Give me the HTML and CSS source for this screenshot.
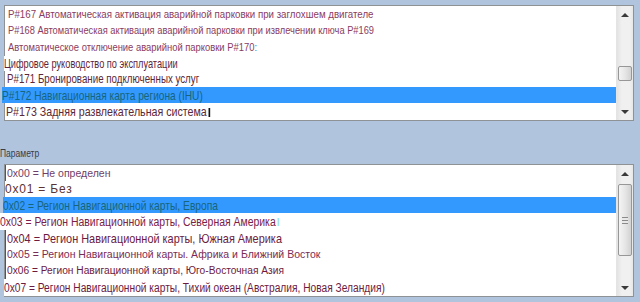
FILE: index.html
```html
<!DOCTYPE html>
<html lang="ru">
  <head>
    <meta charset="UTF-8" />
    <title>Параметры</title>
    <link rel="stylesheet" href="styles.css">
  </head>
  <body>
    <div class="list list-top">
      <div class="rows">
        <div class="row h16 pad3"><span class="t f10 c1 sx97">P#167 Автоматическая активация аварийной парковки при заглохшем двигателе</span></div>
        <div class="row h17 pad3"><span class="t f10 c1 sx93">P#168 Автоматическая активация аварийной парковки при извлечении ключа P#169</span></div>
        <div class="row h17 pad3"><span class="t f10 c1 sx94">Автоматическое отключение аварийной парковки P#170<i class="mark-blue">:</i></span></div>
        <div class="row h15 out1"><span class="t f13 c2 sx71">Цифровое руководство по эксплуатации</span></div>
        <div class="row h16 pad2"><span class="t f125 c3 sx78">P#171 Бронирование подключенных услуг</span></div>
        <div class="row h16 sel out3"><span class="t f13 csel sx78">P#172 Навигационная карта региона (IHU)</span></div>
        <div class="row h16 pad1"><span class="t f13 c3 sx82 tick">P#173 Задняя развлекательная система</span></div>
      </div>
      <div class="scroll">
        <div class="arrow up"></div>
        <div class="track">
          <div class="thumb thumb-small"></div>
        </div>
        <div class="arrow down"></div>
      </div>
    </div>

    <div class="label"><span class="sx85">Параметр</span></div>

    <div class="list list-bottom">
      <div class="rows">
        <div class="row h16 pad1 edge"><span class="t f105 c4">0x00 = Не определен</span></div>
        <div class="row h16"><span class="t f12 c5 wide">0x01 = Без</span></div>
        <div class="row h16 sel out2"><span class="t f13 csel sx79">0x02 = Регион Навигационной карты, Европа</span></div>
        <div class="row h17 out4"><span class="t f12 c6 sx87 cyan">0x03 = Регион Навигационной карты, Северная Америка</span></div>
        <div class="row h16 pad1 edge"><span class="t f13 c7 sx84">0x04 = Регион Навигационной карты, Южная Америка</span></div>
        <div class="row h16 pad1 edge"><span class="t f105 c8">0x05 = Регион Навигационной карты. Африка и Ближний Восток</span></div>
        <div class="row h17 pad1 edge"><span class="t f10 c7 sx102">0x06 = Регион Навигационной карты, Юго-Восточная Азия</span></div>
        <div class="row h17 out1"><span class="t f12 c7 sx85">0x07 = Регион Навигационной карты, Тихий океан (Австралия, Новая Зеландия)</span></div>
      </div>
      <div class="scroll">
        <div class="arrow up"></div>
        <div class="track">
          <div class="thumb thumb-big"><span class="grip"></span></div>
        </div>
        <div class="arrow down"></div>
      </div>
    </div>
  </body>
</html>
```

FILE: styles.css
```css
* {
  box-sizing: border-box;
}

body {
  margin: 0;
  width: 640px;
  height: 302px;
  overflow: hidden;
  background-color: #b0c4de;
  font-family: "Liberation Sans", Arial, sans-serif;
}

.list {
  display: flex;
  margin: 0 6px 0 4px;
  background-color: #fff;
  border: 1px solid #8f9294;
}

.list-top {
  margin-top: 5px;
  height: 116px;
}

.list-bottom {
  height: 133px;
}

.rows {
  flex: 1;
  display: flex;
  flex-direction: column;
  min-width: 0;
}

.row {
  display: flex;
  align-items: center;
  white-space: nowrap;
}

.h15 { height: 15px; }
.h16 { height: 16px; }
.h17 { height: 17px; }

.pad1 { padding-left: 1px; }
.pad2 { padding-left: 2px; }
.pad3 { padding-left: 3px; }
.out1 { margin-left: -1px; }
.out2 { margin-left: -2px; }
.out3 { margin-left: -3px; }
.out4 { margin-left: -5px; }

.row.sel {
  background-color: #3399ff;
}

.t {
  height: 100%;
  display: flex;
  align-items: center;
  padding-right: 4px;
  background-color: #fff;
  transform-origin: left center;
}

.sel .t {
  background-color: transparent;
}

/* the translated captions are squeezed into the old text width */
.sx71 { transform: scaleX(0.71); }
.sx78 { transform: scaleX(0.78); }
.sx79 { transform: scaleX(0.79); }
.sx82 { transform: scaleX(0.82); }
.sx84 { transform: scaleX(0.84); }
.sx85 { transform: scaleX(0.85); }
.sx87 { transform: scaleX(0.87); }
.sx93 { transform: scaleX(0.93); }
.sx94 { transform: scaleX(0.94); }
.sx97 { transform: scaleX(0.97); }
.sx102 { transform: scaleX(1.02); }

.f10 { font-size: 10px; }
.f105 { font-size: 10.5px; }
.f12 { font-size: 12px; }
.f125 { font-size: 12.5px; }
.f13 { font-size: 13px; }

.wide { letter-spacing: 0.8px; }

.c1 { color: #8a3c62; }
.c2 { color: #5e1f3c; }
.c3 { color: #5a2838; }
.c4 { color: #6e3e68; }
.c5 { color: #5c3232; }
.c6 { color: #7a2049; }
.c7 { color: #6c1a41; }
.c8 { color: #7b2c56; }
.csel { color: #17657a; }

.mark-blue {
  font-style: normal;
  color: #3a7bd5;
}

.tick::after {
  content: "";
  width: 2px;
  height: 9px;
  margin-left: 2px;
  margin-top: 3px;
  background-color: #111;
}

.cyan::after {
  content: "";
  width: 2px;
  height: 8px;
  margin-left: 2px;
  background-color: #9fe6ee;
}

.edge {
  border-left: 1px solid #555;
}

.label {
  height: 43px;
  display: flex;
  align-items: flex-end;
  padding-bottom: 4px;
  font-size: 10px;
  line-height: 12px;
  color: #3c3c44;
}

.label span {
  display: inline-block;
  transform-origin: left center;
}

.scroll {
  width: 17px;
  display: flex;
  flex-direction: column;
  background: linear-gradient(to right, #e3e3e3, #f0f0f0 30%, #f0f0f0 80%, #e6e6e6);
  border-left: 1px solid #e4e4e4;
}

.arrow {
  height: 17px;
  display: flex;
  align-items: center;
  justify-content: center;
}

.arrow::before {
  content: "";
  border-left: 4px solid transparent;
  border-right: 4px solid transparent;
}

.arrow.up::before {
  border-bottom: 4px solid #3a3a3a;
}

.arrow.down::before {
  border-top: 4px solid #3a3a3a;
}

.track {
  flex: 1;
  display: flex;
  flex-direction: column;
}

.thumb {
  margin: 0 1px;
  border: 1px solid #979797;
  border-radius: 2px;
  background: linear-gradient(to right, #f4f4f4, #e6e6e6 50%, #d2d2d2);
  display: flex;
  align-items: center;
  justify-content: center;
}

.thumb-small {
  margin-top: 43px;
  height: 15px;
}

.thumb-big {
  margin-top: 2px;
  height: 72px;
}

.grip {
  width: 6px;
  height: 7px;
  background: repeating-linear-gradient(to bottom, #8a8a8a 0, #8a8a8a 1px, #e8e8e8 1px, #e8e8e8 3px);
}
```
